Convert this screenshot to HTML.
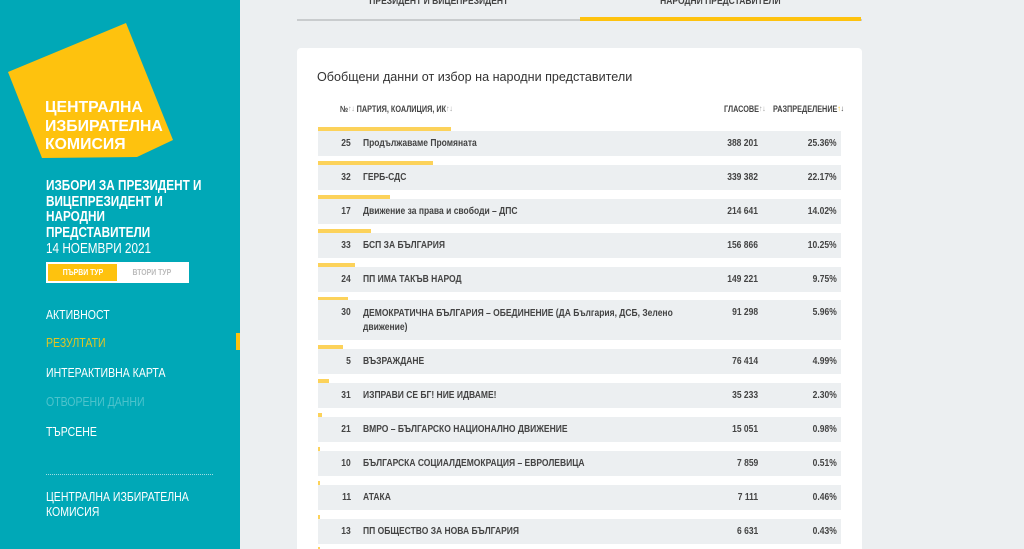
<!DOCTYPE html>
<html><head><meta charset="utf-8"><style>
*{margin:0;padding:0;box-sizing:border-box}
html,body{width:1024px;height:549px;overflow:hidden}
body{background:#eceff1;font-family:"Liberation Sans",sans-serif;position:relative}
.sb{position:absolute;left:0;top:0;width:240px;height:549px;background:#00a8b7}
.a{position:absolute;white-space:nowrap}
.c{display:inline-block;transform:scaleX(.81);transform-origin:0 0;white-space:nowrap}
.cr{display:inline-block;transform:scaleX(.81);transform-origin:100% 0;white-space:nowrap}
.logo{position:absolute;left:45px;top:99px;color:#fff;font:bold 15.8px/18.5px "Liberation Sans",sans-serif}
.h{left:46px;top:179px;color:#fff;font-weight:bold;font-size:14.5px;line-height:15.7px}
.nav{left:46px;font-size:13px;color:#fff}
.tab{position:absolute;top:-5px;font-weight:bold;font-size:10.5px;color:#444;text-align:center}
.tab .c{transform-origin:50% 0}
.card{position:absolute;left:297px;top:48px;width:565px;height:520px;background:#fff;border-radius:4px}
.bar{position:absolute;left:318px;height:4px;background:#fcd25a}
.row{position:absolute;left:318px;width:523px;height:25px;background:#eceff1;font-weight:bold;font-size:10.5px;color:#444}
.row>span{position:absolute;top:6px;white-space:nowrap}
.n{right:490px}.p{left:45px}.v{right:83px}.pc{right:4px}
.th{position:absolute;top:104px;font-weight:bold;font-size:9px;color:#444}
.th i{font-style:normal;color:#999;font-size:8px;vertical-align:top}
</style></head><body>
<div class="sb">
<svg width="240" height="170" style="position:absolute;left:0;top:0"><polygon points="8,72 126,23 173,140 137,157 42,158" fill="#fec20e"/></svg>
<div class="logo">ЦЕНТРАЛНА<br>ИЗБИРАТЕЛНА<br>КОМИСИЯ</div>
<div class="a h"><span class="c">ИЗБОРИ ЗА ПРЕЗИДЕНТ И<br>ВИЦЕПРЕЗИДЕНТ И<br>НАРОДНИ<br>ПРЕДСТАВИТЕЛИ<br><span style="font-weight:normal">14 НОЕМВРИ 2021</span></span></div>
<div style="position:absolute;left:46px;top:262px;width:143px;height:21px;background:#fff;border:2px solid #fff">
<div style="position:absolute;left:0;top:0;width:69px;height:17px;background:#fec20e;color:#fff;font-size:8.5px;font-weight:bold;text-align:center;line-height:17px"><span class="c" style="transform-origin:50% 0">ПЪРВИ ТУР</span></div>
<div style="position:absolute;left:69px;top:0;width:70px;height:17px;color:#bbb;font-size:8.5px;font-weight:bold;text-align:center;line-height:17px"><span class="c" style="transform-origin:50% 0">ВТОРИ ТУР</span></div></div>
<div class="a nav" style="top:307px"><span class="c">АКТИВНОСТ</span></div>
<div class="a nav" style="top:335px;color:#e3c521"><span class="c">РЕЗУЛТАТИ</span></div>
<div class="a nav" style="top:365px"><span class="c">ИНТЕРАКТИВНА КАРТА</span></div>
<div class="a nav" style="top:394px;color:#4dc3cc"><span class="c">ОТВОРЕНИ ДАННИ</span></div>
<div class="a nav" style="top:424px"><span class="c">ТЪРСЕНЕ</span></div>
<div style="position:absolute;left:236px;top:333px;width:4px;height:17px;background:#fec20e"></div>
<div style="position:absolute;left:46px;top:474px;width:167px;border-top:1px dotted #9fdde3"></div>
<div class="a nav" style="top:489px;line-height:15px"><span class="c">ЦЕНТРАЛНА ИЗБИРАТЕЛНА<br>КОМИСИЯ</span></div>
</div>
<div style="position:absolute;left:297px;top:19px;width:565px;height:2px;background:#c9ccce"></div>
<div style="position:absolute;left:580px;top:17px;width:281px;height:4px;background:#fec20e"></div>
<div class="tab" style="left:297px;width:283px"><span class="c">ПРЕЗИДЕНТ И ВИЦЕПРЕЗИДЕНТ</span></div>
<div class="tab" style="left:580px;width:281px"><span class="c">НАРОДНИ ПРЕДСТАВИТЕЛИ</span></div>
<div class="card"></div>
<div class="a" style="left:317px;top:70px;font-size:12.6px;color:#333">Обобщени данни от избор на народни представители</div>
<div class="th" style="left:340px"><span class="c">№<i>↑↓</i> ПАРТИЯ, КОАЛИЦИЯ, ИК<i>↑↓</i></span></div>
<div class="th" style="left:724px"><span class="c">ГЛАСОВЕ<i>↑↓</i></span></div>
<div class="th" style="left:773px"><span class="c">РАЗПРЕДЕЛЕНИЕ<i style="color:#fec20e">↑</i><i style="color:#444">↓</i></span></div>

<div class="bar" style="top:127px;width:133px"></div>
<div class="row" style="top:131px"><span class="n"><span class="cr">25</span></span><span class="p"><span class="c">Продължаваме Промяната</span></span><span class="v"><span class="cr">388 201</span></span><span class="pc"><span class="cr">25.36%</span></span></div>
<div class="bar" style="top:161px;width:115px"></div>
<div class="row" style="top:165px"><span class="n"><span class="cr">32</span></span><span class="p"><span class="c">ГЕРБ-СДС</span></span><span class="v"><span class="cr">339 382</span></span><span class="pc"><span class="cr">22.17%</span></span></div>
<div class="bar" style="top:195px;width:72px"></div>
<div class="row" style="top:199px"><span class="n"><span class="cr">17</span></span><span class="p"><span class="c">Движение за права и свободи – ДПС</span></span><span class="v"><span class="cr">214 641</span></span><span class="pc"><span class="cr">14.02%</span></span></div>
<div class="bar" style="top:229px;width:53px"></div>
<div class="row" style="top:233px"><span class="n"><span class="cr">33</span></span><span class="p"><span class="c">БСП ЗА БЪЛГАРИЯ</span></span><span class="v"><span class="cr">156 866</span></span><span class="pc"><span class="cr">10.25%</span></span></div>
<div class="bar" style="top:263px;width:37px"></div>
<div class="row" style="top:267px"><span class="n"><span class="cr">24</span></span><span class="p"><span class="c">ПП ИМА ТАКЪВ НАРОД</span></span><span class="v"><span class="cr">149 221</span></span><span class="pc"><span class="cr">9.75%</span></span></div>
<div class="bar" style="top:297px;width:30px"></div>
<div class="row" style="top:300px;height:40px"><span class="n"><span class="cr">30</span></span><span class="p" style="line-height:14px"><span class="c">ДЕМОКРАТИЧНА БЪЛГАРИЯ – ОБЕДИНЕНИЕ (ДА България, ДСБ, Зелено<br>движение)</span></span><span class="v"><span class="cr">91 298</span></span><span class="pc"><span class="cr">5.96%</span></span></div>
<div class="bar" style="top:345px;width:25px"></div>
<div class="row" style="top:349px"><span class="n"><span class="cr">5</span></span><span class="p"><span class="c">ВЪЗРАЖДАНЕ</span></span><span class="v"><span class="cr">76 414</span></span><span class="pc"><span class="cr">4.99%</span></span></div>
<div class="bar" style="top:379px;width:11px"></div>
<div class="row" style="top:383px"><span class="n"><span class="cr">31</span></span><span class="p"><span class="c">ИЗПРАВИ СЕ БГ! НИЕ ИДВАМЕ!</span></span><span class="v"><span class="cr">35 233</span></span><span class="pc"><span class="cr">2.30%</span></span></div>
<div class="bar" style="top:413px;width:4px"></div>
<div class="row" style="top:417px"><span class="n"><span class="cr">21</span></span><span class="p"><span class="c">ВМРО – БЪЛГАРСКО НАЦИОНАЛНО ДВИЖЕНИЕ</span></span><span class="v"><span class="cr">15 051</span></span><span class="pc"><span class="cr">0.98%</span></span></div>
<div class="bar" style="top:447px;width:2px"></div>
<div class="row" style="top:451px"><span class="n"><span class="cr">10</span></span><span class="p"><span class="c">БЪЛГАРСКА СОЦИАЛДЕМОКРАЦИЯ – ЕВРОЛЕВИЦА</span></span><span class="v"><span class="cr">7 859</span></span><span class="pc"><span class="cr">0.51%</span></span></div>
<div class="bar" style="top:481px;width:2px"></div>
<div class="row" style="top:485px"><span class="n"><span class="cr">11</span></span><span class="p"><span class="c">АТАКА</span></span><span class="v"><span class="cr">7 111</span></span><span class="pc"><span class="cr">0.46%</span></span></div>
<div class="bar" style="top:515px;width:2px"></div>
<div class="row" style="top:519px"><span class="n"><span class="cr">13</span></span><span class="p"><span class="c">ПП ОБЩЕСТВО ЗА НОВА БЪЛГАРИЯ</span></span><span class="v"><span class="cr">6 631</span></span><span class="pc"><span class="cr">0.43%</span></span></div>
<div class="bar" style="top:547px;width:2px"></div>
</body></html>
